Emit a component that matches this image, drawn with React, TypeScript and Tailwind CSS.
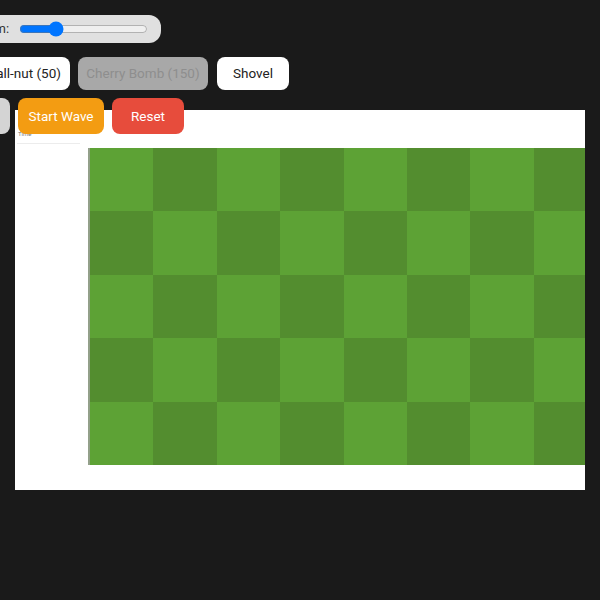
import React from "react";

const ROWS = 5;
const COLS = 9;

function Lawn() {
  const cells = [];
  for (let r = 0; r < ROWS; r++) {
    for (let c = 0; c < COLS; c++) {
      const light = (r + c) % 2 === 0;
      cells.push(
        <div
          key={`${r}-${c}`}
          className={light ? "bg-[#5da235]" : "bg-[#538d2f]"}
        />
      );
    }
  }
  return (
    <div className="grid grid-cols-[repeat(9,63.4px)] grid-rows-[repeat(5,63.4px)] border-l-2 border-[#93a08a] shrink-0">
      {cells}
    </div>
  );
}

export default function App() {
  return (
    <div
      className="relative w-[600px] h-[600px] overflow-hidden bg-[#1a1a1a]"
      style={{ fontFamily: "Roboto, 'Liberation Sans', sans-serif" }}
    >
      {/* game board */}
      <div className="pt-[110px] pl-[15px]">
        <div className="w-[570px] h-[380px] bg-white overflow-hidden flex flex-col">
          <div className="flex flex-col pl-[2px] pt-[21px] h-[38px]">
            <span className="text-[6px] leading-none text-[#777] pl-[1px]">Time</span>
            <div className="mt-[6px] w-[63px] h-px bg-[#ececec]" />
          </div>
          <div className="flex pl-[73px]">
            <Lawn />
          </div>
        </div>
      </div>

      {/* floating controls */}
      <div className="absolute top-0 left-0 flex flex-col">
        <div className="mt-[15px] ml-[-40px] flex items-center gap-2 h-[28px] w-[201px] pl-3 pr-3 rounded-[12px] bg-[#e0e0e0]">
          <span className="text-[13px] text-[#333]">Zoom:</span>
          <input
            type="range"
            min={0}
            max={100}
            defaultValue={26}
            className="w-[129px] m-0 ml-[2px]"
          />
        </div>

        <div className="mt-[14px] ml-[-111px] flex gap-2 h-[33px] text-[13.5px]">
          <button className="w-[72px] rounded-lg bg-white text-[#222]">Sun</button>
          <button className="w-[101px] rounded-lg bg-white text-[#222] text-right pr-[9px] whitespace-nowrap">
            Wall-nut (50)
          </button>
          <button className="w-[130px] rounded-lg bg-[#a8a8a8] text-[#8e8e8e]" disabled>
            Cherry Bomb (150)
          </button>
          <button className="w-[72px] ml-[1px] rounded-lg bg-white text-[#222]">Shovel</button>
        </div>

        <div className="mt-[8px] ml-[-60px] flex gap-2 h-[36px] text-[13.5px]">
          <button className="w-[70px] rounded-lg bg-[#d4d4d4] text-[#333]">Pause</button>
          <button className="w-[86px] rounded-lg bg-[#f39c12] text-white">Start Wave</button>
          <button className="w-[72px] rounded-lg bg-[#e74c3c] text-white">Reset</button>
        </div>
      </div>
    </div>
  );
}
